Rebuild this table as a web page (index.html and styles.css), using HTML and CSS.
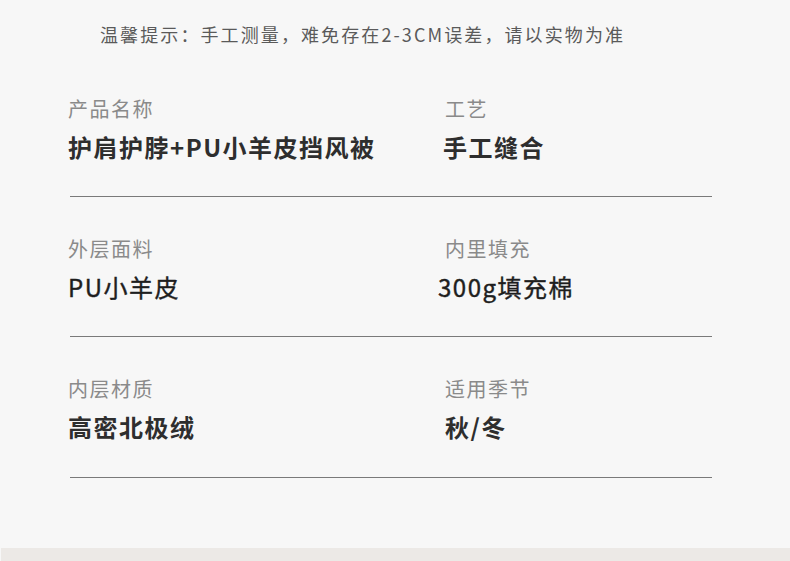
FILE: index.html
```html
<!DOCTYPE html>
<html lang="zh-CN">
<head>
<meta charset="utf-8">
<title>产品参数</title>
<link rel="stylesheet" href="styles.css">
</head>
<body>
<div class="page">
  <div class="content">
    <p class="tip">温馨提示：手工测量，难免存在2-3CM误差，请以实物为准</p>
    <div class="specs">
      <div class="row">
        <div class="item">
          <div class="label">产品名称</div>
          <div class="value">护肩护脖+PU小羊皮挡风被</div>
        </div>
        <div class="item item-right">
          <div class="label">工艺</div>
          <div class="value">手工缝合</div>
        </div>
      </div>
      <div class="row">
        <div class="item">
          <div class="label">外层面料</div>
          <div class="value value-light">PU小羊皮</div>
        </div>
        <div class="item item-right">
          <div class="label">内里填充</div>
          <div class="value value-light value-shift">300g填充棉</div>
        </div>
      </div>
      <div class="row">
        <div class="item">
          <div class="label">内层材质</div>
          <div class="value">高密北极绒</div>
        </div>
        <div class="item item-right">
          <div class="label">适用季节</div>
          <div class="value value-in">秋/冬</div>
        </div>
      </div>
    </div>
  </div>
  <div class="band"></div>
</div>
</body>
</html>
```
FILE: styles.css
```css
html, body {
  margin: 0;
  padding: 0;
  background: #f7f7f7;
}
body {
  font-family: "Noto Sans CJK SC", "Noto Sans", sans-serif;
}
.page {
  width: 790px;
  height: 561px;
  display: flex;
  flex-direction: column;
  overflow: hidden;
}
.content {
  flex: 1;
}
.tip {
  margin: 0;
  padding: 21px 0 0 100px;
  font-size: 18px;
  line-height: 26px;
  letter-spacing: 2.1px;
  color: #5a5a5a;
}
.specs {
  margin-top: 48px;
}
.row {
  margin-left: 70px;
  width: 642px;
  display: grid;
  grid-template-columns: 373px 1fr;
  border-bottom: 1px solid #7a7a7a;
  padding-bottom: 33px;
}
.row + .row {
  padding-top: 38px;
}
.row:last-child {
  padding-bottom: 34px;
}
.item {
  margin-left: -2px;
  display: flex;
  flex-direction: column;
  gap: 8px;
}
.item-right {
  margin-left: 0;
}
.item-right .label {
  padding-left: 2px;
}
.label {
  font-size: 20px;
  line-height: 28px;
  letter-spacing: 1.5px;
  color: #8a8a8a;
}
.value {
  font-size: 24px;
  line-height: 32px;
  letter-spacing: 1.5px;
  font-weight: 700;
  color: #2e2e2e;
}
.value-light {
  font-weight: 400;
  color: #1e1e1e;
  -webkit-text-stroke: 0.4px #1e1e1e;
}
.value-shift {
  margin-left: -5px;
}
.value-in {
  padding-left: 2px;
}
.band {
  height: 13px;
  margin-left: 1px;
  background: #ece9e6;
}
```
